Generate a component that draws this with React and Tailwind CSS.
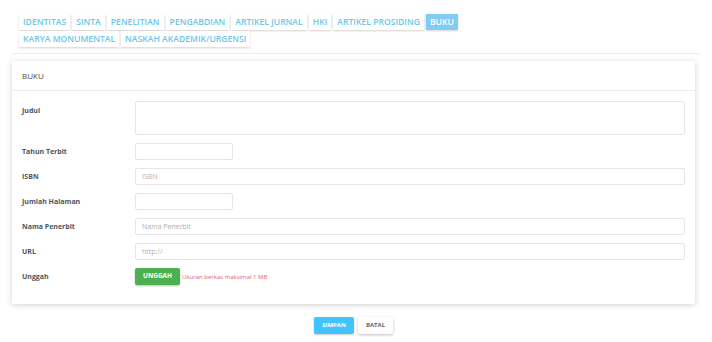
const TABS = [
  'IDENTITAS',
  'SINTA',
  'PENELITIAN',
  'PENGABDIAN',
  'ARTIKEL JURNAL',
  'HKI',
  'ARTIKEL PROSIDING',
  'BUKU',
  'KARYA MONUMENTAL',
  'NASKAH AKADEMIK/URGENSI',
];

const ACTIVE = 'BUKU';

function Field({ label, children, top }) {
  return (
    <div className={`flex ${top ? 'items-start' : 'items-center'}`}>
      <label
        className={`w-[113px] shrink-0 text-[7px] font-bold leading-[10px] text-[#4b5563] ${top ? 'pt-[5px]' : ''}`}
      >
        {label}
      </label>
      <div className="flex flex-1 leading-none">{children}</div>
    </div>
  );
}

const inputCls =
  'block h-[17px] rounded-[2px] border border-[#e6e6e6] bg-white px-[6px] text-[7px] text-[#555] placeholder:text-[#b0b0b0] outline-none';

export default function App() {
  return (
    <div
      className="min-h-[342px] w-[712px] bg-white"
      style={{ fontFamily: '"Open Sans", "Liberation Sans", sans-serif' }}
    >
      {/* tab pills */}
      <div className="flex w-[480px] flex-wrap gap-x-[2px] gap-y-[1px] pl-[19px] pt-[14px]">
        {TABS.map((t) => (
          <span
            key={t}
            className={`h-[16px] px-[4px] text-[8.6px] font-semibold leading-[16px] shadow-[0_1px_2px_rgba(0,0,0,0.18)] ${
              t === ACTIVE ? 'bg-[#80ccf6] text-white' : 'bg-white text-[#6cc6ea]'
            }`}
          >
            {t}
          </span>
        ))}
      </div>

      <div className="mx-[12px] mt-[6px] h-px bg-[#ececec]" />

      {/* card */}
      <div className="ml-[12px] mt-[7px] w-[683px] bg-white shadow-[0_1px_6px_rgba(0,0,0,0.18)]">
        <div className="flex h-[30px] items-center border-b border-[#ececec] px-[10px] text-[8px] text-[#4a4a4a]">
          BUKU
        </div>
        <div className="flex flex-col gap-[8px] px-[10px] pb-[19px] pt-[10px]">
          <Field label="Judul" top>
            <textarea className="block h-[34px] w-full resize-none rounded-[2px] border border-[#e6e6e6] outline-none" />
          </Field>
          <Field label="Tahun Terbit">
            <input className={`${inputCls} w-[98px]`} />
          </Field>
          <Field label="ISBN">
            <input className={`${inputCls} w-full`} placeholder="ISBN" />
          </Field>
          <Field label="Jumlah Halaman">
            <input className={`${inputCls} w-[98px]`} />
          </Field>
          <Field label="Nama Penerbit">
            <input className={`${inputCls} w-full`} placeholder="Nama Penerbit" />
          </Field>
          <Field label="URL">
            <input className={`${inputCls} w-full`} placeholder="http://" />
          </Field>
          <Field label="Unggah">
            <div className="flex items-center gap-[2px]">
              <button className="h-[17px] rounded-[2px] bg-[#4caf50] px-[8px] text-[6.5px] font-bold text-white shadow-[0_1px_2px_rgba(0,0,0,0.25)]">
                UNGGAH
              </button>
              <span className="text-[6px] text-[#e0646a]">Ukuran berkas maksimal 1 MB</span>
            </div>
          </Field>
        </div>
      </div>

      {/* actions */}
      <div className="mt-[13px] flex justify-center gap-[4px] pr-[5px]">
        <button className="h-[17px] w-[40px] rounded-[2px] bg-[#40c4ff] text-[6px] font-bold text-white shadow-[0_1px_2px_rgba(0,0,0,0.2)]">
          SIMPAN
        </button>
        <button className="h-[17px] w-[35px] rounded-[2px] bg-white text-[6px] font-bold text-[#666] shadow-[0_1px_3px_rgba(0,0,0,0.25)]">
          BATAL
        </button>
      </div>
    </div>
  );
}
